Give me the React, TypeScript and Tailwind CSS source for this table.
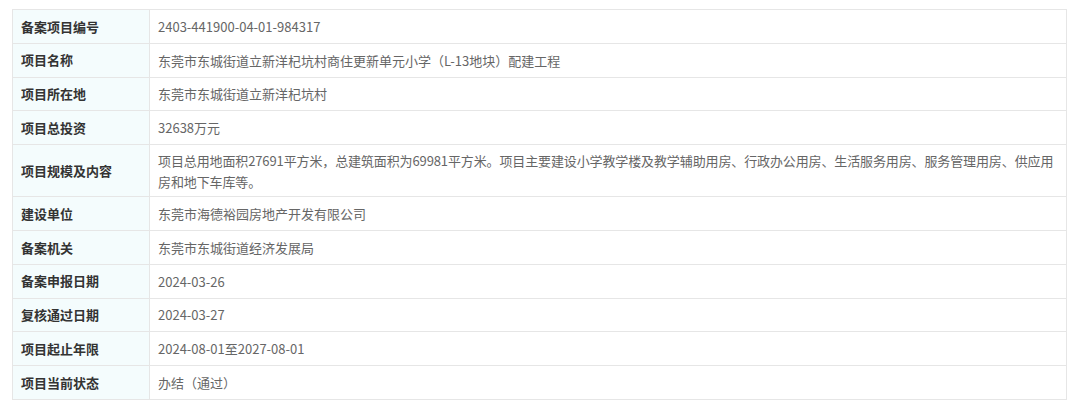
import React from "react";

const rows: [string, string][] = [
  ["备案项目编号", "2403-441900-04-01-984317"],
  ["项目名称", "东莞市东城街道立新洋杞坑村商住更新单元小学（L-13地块）配建工程"],
  ["项目所在地", "东莞市东城街道立新洋杞坑村"],
  ["项目总投资", "32638万元"],
  [
    "项目规模及内容",
    "项目总用地面积27691平方米，总建筑面积为69981平方米。项目主要建设小学教学楼及教学辅助用房、行政办公用房、生活服务用房、服务管理用房、供应用房和地下车库等。",
  ],
  ["建设单位", "东莞市海德裕园房地产开发有限公司"],
  ["备案机关", "东莞市东城街道经济发展局"],
  ["备案申报日期", "2024-03-26"],
  ["复核通过日期", "2024-03-27"],
  ["项目起止年限", "2024-08-01至2027-08-01"],
  ["项目当前状态", "办结（通过）"],
];

export default function App() {
  return (
    <div
      className="w-[1080px] h-[411px] bg-white pt-[9px] pl-[12px]"
      style={{ fontFamily: '"Noto Sans CJK SC", "Noto Sans", sans-serif' }}
    >
      <table className="w-[1055px] border-collapse border border-[#e6e6e6] text-[13px]">
        <tbody>
          {rows.map(([k, v], i) => (
            <tr key={i} className={i === 4 ? "h-[52px]" : "h-[33.8px]"}>
              <td className="w-[137px] border border-[#e6e6e6] bg-[#f4fcfd] pl-[8px] font-bold text-[#333333] align-middle">
                {k}
              </td>
              <td
                className={
                  "border border-[#e6e6e6] pl-[8px] pr-[6px] text-[#666666] leading-[21px] align-middle" +
                  (i === 4 ? " tracking-[-0.12px]" : "")
                }
              >
                {v}
              </td>
            </tr>
          ))}
        </tbody>
      </table>
    </div>
  );
}
